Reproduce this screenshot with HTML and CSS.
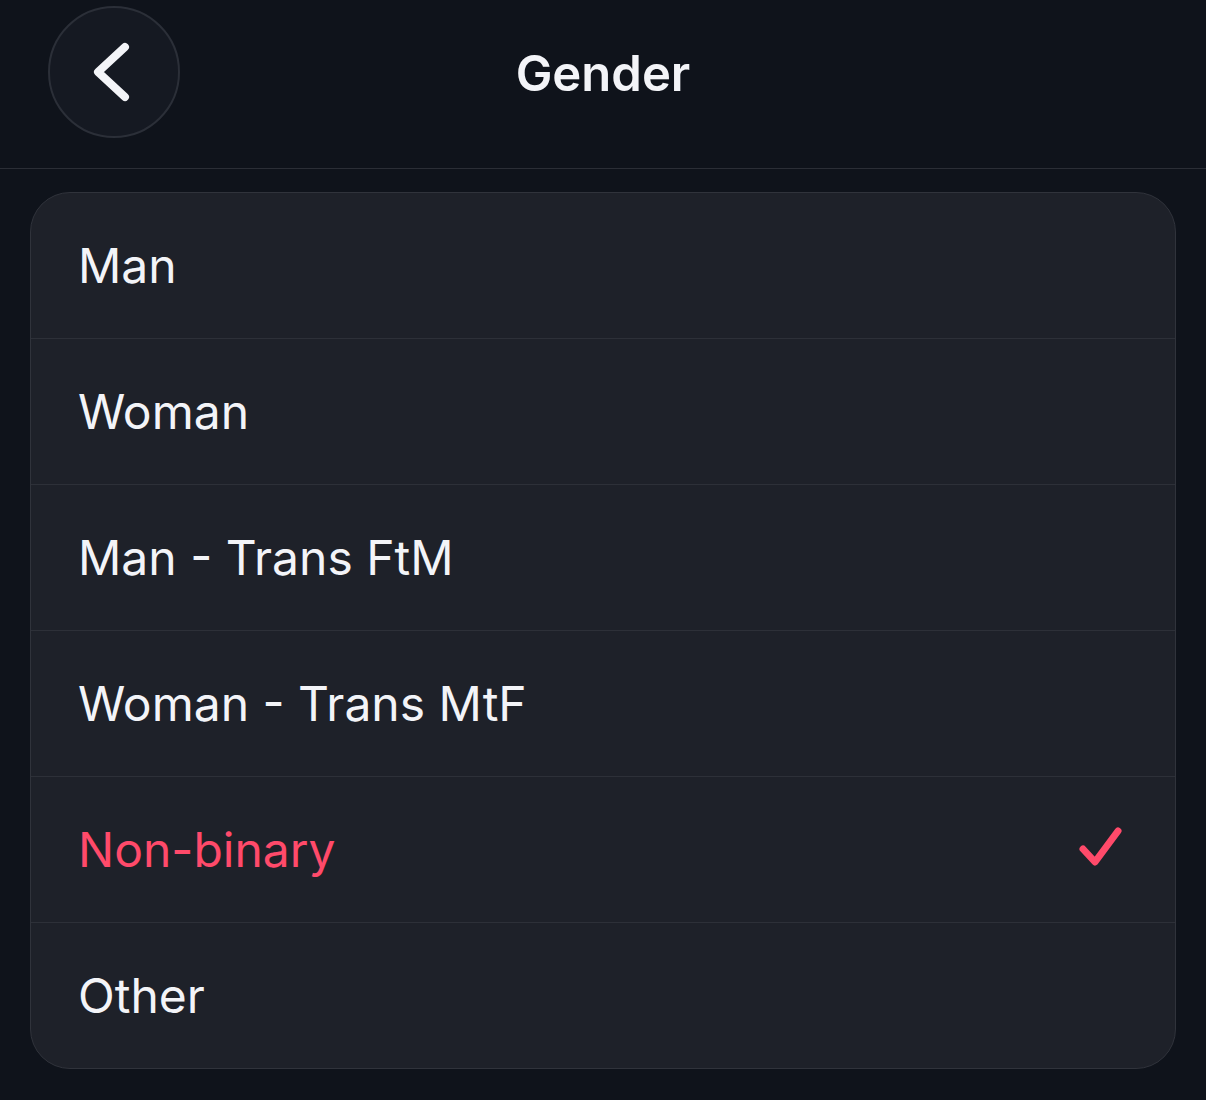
FILE: index.html
```html
<!DOCTYPE html>
<html lang="en">

<head>
    <meta charset="UTF-8">
    <meta name="viewport" content="width=device-width, initial-scale=1.0">
    <title>Gender</title>
    <link rel="stylesheet" href="styles.css">
</head>

<body>
    <header class="topBar">
        <button type="button" class="backBtn" aria-label="Back">
            <svg width="60" height="60" viewBox="0 0 60 60">
                <path d="M44 17 L17 42 L44 67" transform="translate(-3 -12)" fill="none" stroke="#f3f4f8"
                    stroke-width="8" stroke-linecap="round" stroke-linejoin="round" />
            </svg>
        </button>
        <h1 class="title">Gender</h1>
    </header>

    <ul class="optionList">
        <li class="option">Man</li>
        <li class="option">Woman</li>
        <li class="option">Man - Trans FtM</li>
        <li class="option">Woman - Trans MtF</li>
        <li class="option selected">Non-binary
            <svg class="check" width="48" height="48" viewBox="0 0 48 48">
                <path d="M5 23 L17 36 L40 5" fill="none" stroke="#ff4a6a" stroke-width="7"
                    stroke-linecap="round" stroke-linejoin="round" />
            </svg>
        </li>
        <li class="option">Other</li>
    </ul>
</body>

</html>
```

FILE: styles.css
```css
body {
    margin: 0;
    background: #0f131b;
    font-family: Inter, "Noto Sans", sans-serif;
    color: #f3f4f8;
}

.topBar {
    position: relative;
    height: 168px;
    border-bottom: 1px solid #2b2e36;
    display: flex;
    align-items: center;
    justify-content: center;
}

.backBtn {
    position: absolute;
    left: 48px;
    top: 6px;
    width: 132px;
    height: 132px;
    border-radius: 50%;
    background: #151922;
    border: 2px solid #2b2f38;
    display: flex;
    align-items: center;
    justify-content: center;
    padding: 0;
    cursor: pointer;
}

.title {
    margin: 0;
    font-size: 49px;
    font-weight: 600;
    margin-top: -22px;
}

.optionList {
    list-style: none;
    margin: 23px 30px 0;
    padding: 0;
    background: #1e2129;
    border: 1px solid #30333b;
    border-radius: 40px;
    overflow: hidden;
}

.option {
    height: 145px;
    display: flex;
    align-items: center;
    justify-content: space-between;
    padding: 0 49px 0 47px;
    font-size: 48px;
    border-bottom: 1px solid #2d3038;
}

.option:last-child {
    border-bottom: 0;
}

.selected {
    color: #ff4a6a;
}
```
